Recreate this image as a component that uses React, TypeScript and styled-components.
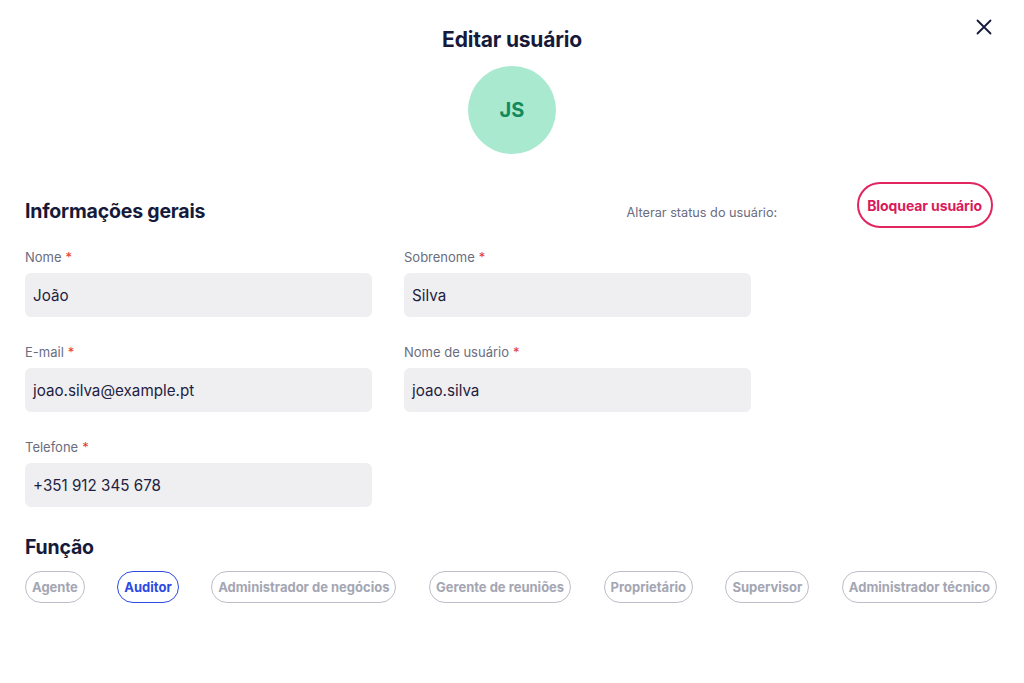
import React from "react";
import styled, { createGlobalStyle } from "styled-components";

const GlobalStyle = createGlobalStyle`
  html, body { margin: 0; padding: 0; background: #ffffff; }
  body { font-family: Inter, "Noto Sans", Arial, sans-serif; color: #161a3a; }
  * { box-sizing: border-box; }
`;

const Page = styled.div`
  position: relative;
  width: 1024px;
  height: 683px;
  padding: 26px 25px 0 25px;
  display: flex;
  flex-direction: column;
`;

const CloseButton = styled.button`
  position: absolute;
  top: 17px;
  right: 30px;
  width: 20px;
  height: 20px;
  padding: 0;
  border: none;
  background: none;
  display: flex;
  align-items: center;
  justify-content: center;
  cursor: pointer;
`;

const Header = styled.div`
  display: flex;
  flex-direction: column;
  align-items: center;
  gap: 12px;
`;

const Title = styled.h1`
  margin: 0;
  font-size: 21px;
  line-height: 28px;
  font-weight: 700;
  color: #161a3a;
  letter-spacing: -0.2px;
`;

const Avatar = styled.div`
  width: 88px;
  height: 88px;
  border-radius: 50%;
  background: #a9e9d0;
  color: #148a5c;
  font-size: 20px;
  font-weight: 700;
  display: flex;
  align-items: center;
  justify-content: center;
`;

const SectionRow = styled.div`
  margin-top: 28px;
  padding-right: 6px;
  display: flex;
  align-items: center;
  justify-content: space-between;
`;

const SectionTitle = styled.h2<{ $top?: number }>`
  margin: ${(p) => p.$top ?? 0}px 0 0;
  font-size: 19.5px;
  line-height: 24px;
  font-weight: 700;
  color: #161a3a;
  letter-spacing: -0.2px;
`;

const StatusGroup = styled.div`
  display: flex;
  align-items: center;
  gap: 80px;
`;

const StatusLabel = styled.span`
  font-size: 12.7px;
  color: #6a6d80;
  margin-top: 14px;
`;

const BlockButton = styled.button`
  height: 46px;
  padding: 0 9px 0 8px;
  border: 2px solid #e2245f;
  border-radius: 23px;
  background: #fff;
  color: #d91b5c;
  font-family: inherit;
  font-size: 14px;
  font-weight: 700;
  letter-spacing: -0.1px;
  cursor: pointer;
`;

const FormGrid = styled.div`
  margin-top: 20px;
  display: grid;
  grid-template-columns: 347px 347px;
  column-gap: 32px;
  row-gap: 26px;
`;

const Field = styled.div`
  display: flex;
  flex-direction: column;
  gap: 7px;
`;

const Label = styled.label`
  font-size: 13px;
  line-height: 18px;
  color: #6a6d80;
`;

const Required = styled.span`
  color: #e53935;
  margin-left: 4px;
`;

const Input = styled.div`
  height: 44px;
  border-radius: 6px;
  background: #efeff2;
  padding: 0 8px;
  display: flex;
  align-items: center;
  font-size: 15.2px;
  color: #1e2240;
`;

const Chips = styled.div`
  margin-top: 12px;
  padding-right: 2px;
  display: flex;
  justify-content: space-between;
`;

const Chip = styled.button<{ $active?: boolean }>`
  height: 32px;
  padding: 0 6px;
  border-radius: 16px;
  border: 1.5px solid ${(p) => (p.$active ? "#2c4ae3" : "#bcbec9")};
  background: #fff;
  color: ${(p) => (p.$active ? "#2c4ae3" : "#a4a6b3")};
  font-family: inherit;
  font-size: 13px;
  font-weight: 700;
  white-space: nowrap;
  cursor: pointer;
`;

const fields = [
  { label: "Nome", value: "João" },
  { label: "Sobrenome", value: "Silva" },
  { label: "E-mail", value: "joao.silva@example.pt" },
  { label: "Nome de usuário", value: "joao.silva" },
  { label: "Telefone", value: "+351 912 345 678" },
];

const roles = [
  "Agente",
  "Auditor",
  "Administrador de negócios",
  "Gerente de reuniões",
  "Proprietário",
  "Supervisor",
  "Administrador técnico",
];

export default function App() {
  return (
    <>
      <GlobalStyle />
      <Page>
        <CloseButton aria-label="Fechar">
          <svg width="16" height="16" viewBox="0 0 16 16" fill="none">
            <path d="M1.5 1.5L14.5 14.5M14.5 1.5L1.5 14.5" stroke="#161a3a" strokeWidth="1.8" strokeLinecap="round" />
          </svg>
        </CloseButton>
        <Header>
          <Title>Editar usuário</Title>
          <Avatar>JS</Avatar>
        </Header>
        <SectionRow>
          <SectionTitle $top={12}>Informações gerais</SectionTitle>
          <StatusGroup>
            <StatusLabel>Alterar status do usuário:</StatusLabel>
            <BlockButton>Bloquear usuário</BlockButton>
          </StatusGroup>
        </SectionRow>
        <FormGrid>
          {fields.map((f) => (
            <Field key={f.label}>
              <Label>
                {f.label}
                <Required>*</Required>
              </Label>
              <Input>{f.value}</Input>
            </Field>
          ))}
        </FormGrid>
        <SectionTitle $top={28}>Função</SectionTitle>
        <Chips>
          {roles.map((r) => (
            <Chip key={r} $active={r === "Auditor"}>
              {r}
            </Chip>
          ))}
        </Chips>
      </Page>
    </>
  );
}
